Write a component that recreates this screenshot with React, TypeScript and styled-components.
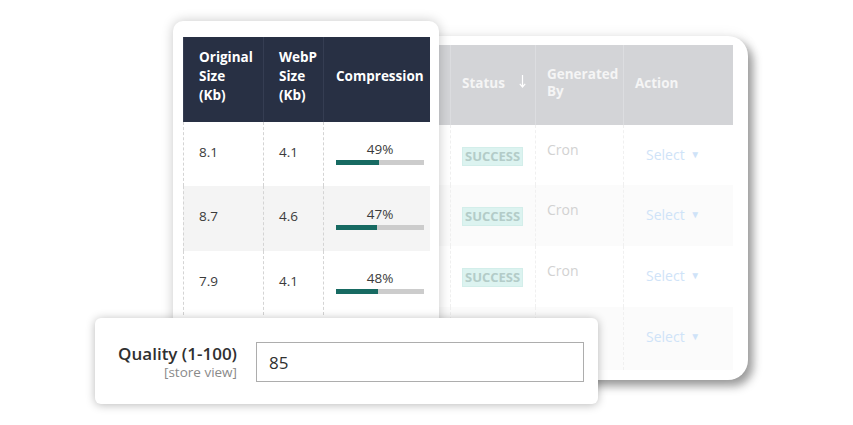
import React from "react";
import styled, { createGlobalStyle } from "styled-components";

const GlobalStyle = createGlobalStyle`
  html, body { margin: 0; padding: 0; background: #ffffff; }
  body { font-family: "Open Sans", "Noto Sans", sans-serif; }
`;

const frontRows = [
  { original: "8.1", webp: "4.1", pct: 49 },
  { original: "8.7", webp: "4.6", pct: 47 },
  { original: "7.9", webp: "4.1", pct: 48 },
];

const backRows = [60, 61, 61, 63];

export default function App() {
  return (
    <>
      <GlobalStyle />
      <Stage>
        <BackCard>
          <BackTable>
            <BackHead />
            <BackHead>
              Status
              <SortArrow width="9" height="16" viewBox="0 0 9 16">
                <path d="M4.5 2v12M1.8 10.8L4.5 14l2.7-3.2" fill="none" stroke="#ffffff" strokeWidth="1.2" />
              </SortArrow>
            </BackHead>
            <BackHead>
              Generated
              <br />
              By
            </BackHead>
            <BackHead>Action</BackHead>
            {backRows.map((h, i) => (
              <React.Fragment key={i}>
                <BackCell $h={h} $odd={i % 2 === 1} />
                <BackCell $h={h} $odd={i % 2 === 1}>
                  <Badge>SUCCESS</Badge>
                </BackCell>
                <BackCell $h={h} $odd={i % 2 === 1}>
                  <CronText>Cron</CronText>
                </BackCell>
                <BackCell $h={h} $odd={i % 2 === 1}>
                  <SelectText>
                    Select <Caret>▼</Caret>
                  </SelectText>
                </BackCell>
              </React.Fragment>
            ))}
          </BackTable>
        </BackCard>

        <FrontCard>
          <FrontTable>
            <HeadCell>
              Original
              <br />
              Size
              <br />
              (Kb)
            </HeadCell>
            <HeadCell>
              WebP
              <br />
              Size
              <br />
              (Kb)
            </HeadCell>
            <HeadCell $last>Compression</HeadCell>
            {frontRows.map((r, i) => (
              <React.Fragment key={i}>
                <BodyCell $odd={i % 2 === 1}>{r.original}</BodyCell>
                <BodyCell $odd={i % 2 === 1}>{r.webp}</BodyCell>
                <BodyCell $odd={i % 2 === 1} $center>
                  <Percent>{r.pct}%</Percent>
                  <Bar>
                    <BarFill style={{ width: `${r.pct}%` }} />
                  </Bar>
                </BodyCell>
              </React.Fragment>
            ))}
          </FrontTable>
        </FrontCard>

        <QualityCard>
          <LabelBlock>
            <LabelTitle>Quality (1-100)</LabelTitle>
            <LabelScope>[store view]</LabelScope>
          </LabelBlock>
          <QualityInput defaultValue="85" />
        </QualityCard>
      </Stage>
    </>
  );
}

const Stage = styled.div`
  position: relative;
  width: 853px;
  height: 425px;
  overflow: hidden;
  background: #ffffff;
`;

const BackCard = styled.div`
  position: absolute;
  left: 185px;
  top: 36px;
  width: 563px;
  height: 344px;
  box-sizing: border-box;
  padding: 9px 15px 10px 10px;
  background: #ffffff;
  border-radius: 20px;
  box-shadow: 5px 6px 10px rgba(0, 0, 0, 0.38), 0 0 14px rgba(0, 0, 0, 0.08);
`;

const BackTable = styled.div`
  display: grid;
  grid-template-columns: 255px 85px 88px 110px;
`;

const BackHead = styled.div`
  height: 80px;
  box-sizing: border-box;
  display: flex;
  align-items: center;
  padding: 0 11px 4px;
  background: #d3d4d7;
  border-left: 1px solid #dcdde0;
  color: #f5f5f5;
  font-size: 13.5px;
  font-weight: 700;
  line-height: 17px;
  white-space: nowrap;
`;

const SortArrow = styled.svg`
  flex-shrink: 0;
  margin-left: 13px;
  margin-top: -4px;
`;

const BackCell = styled.div<{ $h: number; $odd: boolean }>`
  height: ${(p) => p.$h}px;
  box-sizing: border-box;
  padding: 19px 11px 0;
  background: ${(p) => (p.$odd ? "#fbfbfb" : "#ffffff")};
  border-left: 1px dashed #f0f0f0;
`;

const Badge = styled.span`
  display: inline-block;
  padding: 0 2px;
  background: #dcf3f0;
  border: 1px solid #d3eeea;
  color: #b3ccc8;
  font-size: 13px;
  font-weight: 700;
  line-height: 17px;
`;

const CronText = styled.span`
  display: block;
  margin-top: -4px;
  color: #d2d2d2;
  font-size: 14px;
`;

const SelectText = styled.span`
  display: block;
  margin: 1px 0 0 11px;
  color: #cfe3f8;
  font-size: 14px;
`;

const Caret = styled.span`
  font-size: 10px;
  margin-left: 2px;
  vertical-align: 2px;
`;

const FrontCard = styled.div`
  position: absolute;
  left: 173px;
  top: 21px;
  width: 266px;
  height: 320px;
  box-sizing: border-box;
  padding: 16px 9px 0 10px;
  background: #ffffff;
  border-radius: 10px;
  box-shadow: 0 0 12px rgba(0, 0, 0, 0.22);
`;

const FrontTable = styled.div`
  display: grid;
  grid-template-columns: 80px 60px 107px;
  grid-template-rows: 85px 64px 65px 64px;
`;

const HeadCell = styled.div<{ $last?: boolean }>`
  display: flex;
  align-items: center;
  box-sizing: border-box;
  padding: 0 8px 6px ${(p) => (p.$last ? "12px" : "15px")};
  background: #283044;
  border-left: 1px solid #353d52;
  color: #ffffff;
  font-size: 13.5px;
  font-weight: 700;
  line-height: 19px;
`;

const BodyCell = styled.div<{ $odd: boolean; $center?: boolean }>`
  display: flex;
  flex-direction: column;
  justify-content: center;
  align-items: ${(p) => (p.$center ? "stretch" : "flex-start")};
  box-sizing: border-box;
  padding: ${(p) => (p.$center ? "0 6px 2px 12px" : "0 0 5px 15px")};
  background: ${(p) => (p.$odd ? "#f4f4f4" : "#ffffff")};
  border-left: 1px dashed #d4d4d4;
  color: #3b3b3b;
  font-size: 13.5px;
`;

const Percent = styled.div`
  text-align: center;
  line-height: 16px;
  color: #3b3b3b;
  font-size: 13.5px;
`;

const Bar = styled.div`
  height: 5px;
  margin-top: 3px;
  background: #cccccc;
`;

const BarFill = styled.div`
  height: 100%;
  background: #176a62;
`;

const QualityCard = styled.div`
  position: absolute;
  left: 95px;
  top: 318px;
  width: 503px;
  height: 86px;
  box-sizing: border-box;
  padding: 2px 14px 0 0;
  display: flex;
  align-items: center;
  gap: 19px;
  background: #ffffff;
  border-radius: 6px;
  box-shadow: 0 1px 10px rgba(0, 0, 0, 0.28);
`;

const LabelBlock = styled.div`
  width: 142px;
  flex-shrink: 0;
  text-align: right;
`;

const LabelTitle = styled.div`
  color: #303030;
  font-size: 17px;
  font-weight: 600;
  line-height: 18px;
`;

const LabelScope = styled.div`
  margin-top: 2px;
  color: #8a8a8a;
  font-size: 13.5px;
  line-height: 14px;
`;

const QualityInput = styled.input`
  flex: 1;
  height: 40px;
  box-sizing: border-box;
  padding: 0 12px;
  border: 1px solid #adadad;
  border-radius: 0;
  outline: none;
  color: #303030;
  font-family: "Open Sans", "Noto Sans", sans-serif;
  font-size: 17px;
`;
